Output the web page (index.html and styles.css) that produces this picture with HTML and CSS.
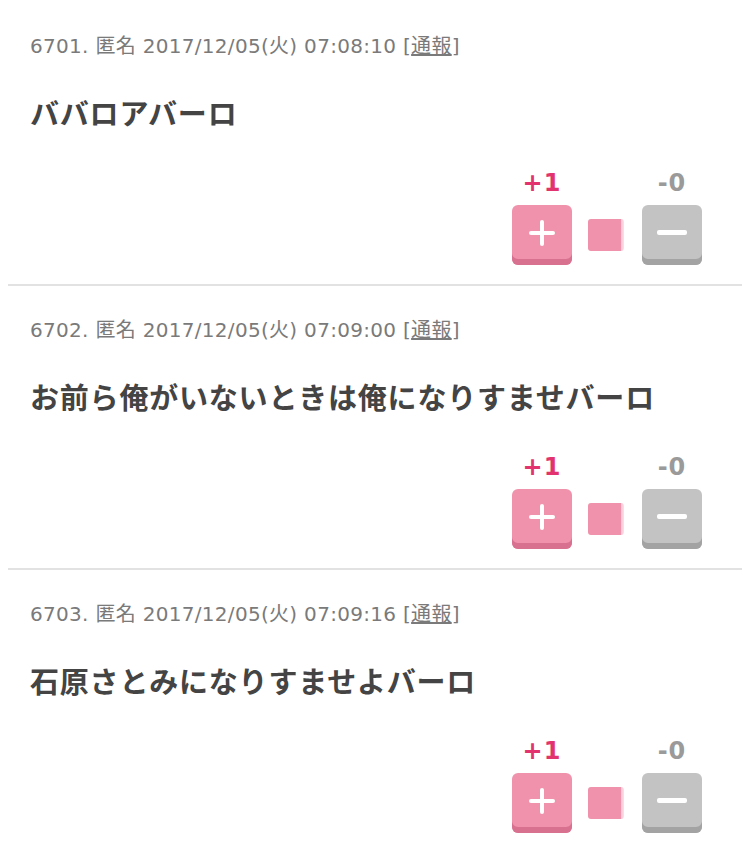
FILE: index.html
```html
<!DOCTYPE html>
<html lang="ja">
<head>
<meta charset="utf-8">
<link rel="stylesheet" href="styles.css">
</head>
<body>
<div class="list">
  <div class="post">
    <div class="meta">6701. 匿名 2017/12/05(火) 07:08:10 [<span class="report">通報</span>]</div>
    <div class="body">ババロアバーロ</div>
    <div class="votes">
      <div class="vote">
        <div class="count plus-count">+1</div>
        <div class="btn btn-plus"><span class="sign-plus"></span></div>
      </div>
      <div class="bar"></div>
      <div class="vote">
        <div class="count minus-count">-0</div>
        <div class="btn btn-minus"><span class="sign-minus"></span></div>
      </div>
    </div>
  </div>
  <div class="post">
    <div class="meta">6702. 匿名 2017/12/05(火) 07:09:00 [<span class="report">通報</span>]</div>
    <div class="body">お前ら俺がいないときは俺になりすませバーロ</div>
    <div class="votes">
      <div class="vote">
        <div class="count plus-count">+1</div>
        <div class="btn btn-plus"><span class="sign-plus"></span></div>
      </div>
      <div class="bar"></div>
      <div class="vote">
        <div class="count minus-count">-0</div>
        <div class="btn btn-minus"><span class="sign-minus"></span></div>
      </div>
    </div>
  </div>
  <div class="post">
    <div class="meta">6703. 匿名 2017/12/05(火) 07:09:16 [<span class="report">通報</span>]</div>
    <div class="body">石原さとみになりすませよバーロ</div>
    <div class="votes">
      <div class="vote">
        <div class="count plus-count">+1</div>
        <div class="btn btn-plus"><span class="sign-plus"></span></div>
      </div>
      <div class="bar"></div>
      <div class="vote">
        <div class="count minus-count">-0</div>
        <div class="btn btn-minus"><span class="sign-minus"></span></div>
      </div>
    </div>
  </div>
</div>
</body>
</html>
```
FILE: styles.css
```css
html, body {
  margin: 0;
  padding: 0;
  background: #ffffff;
}
body {
  font-family: "Noto Sans CJK JP", "Noto Sans", sans-serif;
}
.list {
  padding: 2px 8px 0;
}
.post {
  padding: 30px 40px 19px 22px;
  border-bottom: 2px solid #e2e2e2;
}
.meta {
  font-family: "DejaVu Sans", "Noto Sans CJK JP", sans-serif;
  font-size: 20px;
  line-height: 28px;
  letter-spacing: 0.3px;
  color: #7a7a7a;
  white-space: nowrap;
}
.report {
  text-decoration: underline;
}
.body {
  margin-top: 32px;
  font-size: 29px;
  line-height: 40px;
  font-weight: 700;
  color: #444444;
  letter-spacing: 0.8px;
}
.votes {
  margin-top: 37px;
  display: flex;
  justify-content: flex-end;
  align-items: flex-end;
}
.vote {
  display: flex;
  flex-direction: column;
  align-items: center;
  width: 60px;
}
.count {
  font-family: "DejaVu Sans", "Noto Sans", sans-serif;
  font-weight: 700;
  font-size: 24px;
  line-height: 28px;
  letter-spacing: 1px;
  margin-bottom: 8px;
}
.plus-count {
  color: #e2336f;
}
.minus-count {
  color: #9a9a9a;
}
.btn {
  width: 60px;
  height: 60px;
  border-radius: 6px;
  display: flex;
  align-items: center;
  justify-content: center;
  padding-bottom: 5px;
  box-sizing: border-box;
}
.btn-plus {
  background: #f092ac;
  box-shadow: inset 0 -6px 0 #d8718f;
}
.btn-minus {
  background: #c3c3c3;
  box-shadow: inset 0 -6px 0 #a3a3a3;
}
.sign-plus {
  position: relative;
  width: 26px;
  height: 4px;
  background: #ffffff;
  border-radius: 2px;
}
.sign-plus::after {
  content: "";
  position: absolute;
  left: 11px;
  top: -11px;
  width: 4px;
  height: 26px;
  background: #ffffff;
  border-radius: 2px;
}
.sign-minus {
  width: 30px;
  height: 5px;
  background: #ffffff;
  border-radius: 2px;
}
.bar {
  width: 36px;
  height: 32px;
  margin: 0 18px 14px 16px;
  border-radius: 3px;
  background: linear-gradient(to right, #f092ac 0, #f092ac 33px, #f9c5d3 33px, #fbe0e8 36px);
}
```
